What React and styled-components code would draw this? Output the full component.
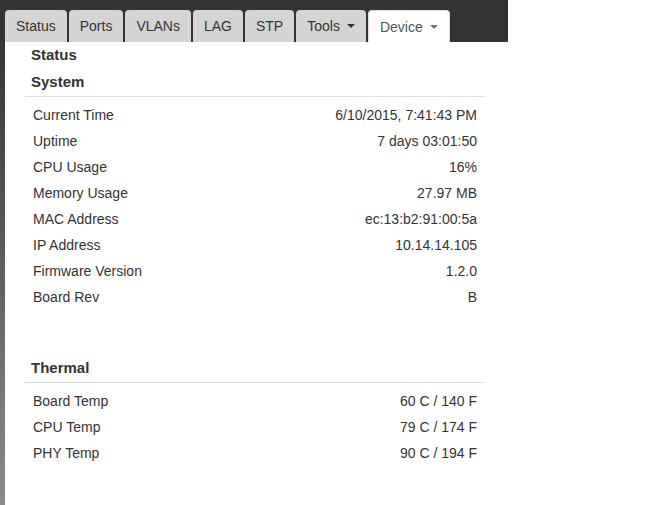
import React from 'react';
import styled, { createGlobalStyle } from 'styled-components';

const GlobalStyle = createGlobalStyle`
    html, body {
        margin: 0;
        padding: 0;
        background: #fff;
        font-family: 'Liberation Sans', Arial, sans-serif;
        font-size: 14px;
        color: #333;
    }
`;

const Page = styled.div`
    width: 508px;
    min-height: 100vh;
    display: flex;
    flex-direction: column;
`;

const TabBar = styled.ul`
    display: flex;
    align-items: flex-end;
    gap: 2px;
    margin: 0;
    padding: 10px 0 0 5px;
    list-style: none;
    background: #333;
`;

const Tab = styled.li`
    display: flex;
    align-items: center;
    height: ${(p) => (p.$active ? '31px' : '32px')};
    padding: 0 11px;
    border-radius: 4px 4px 0 0;
    background: ${(p) => (p.$active ? '#fff' : '#d4d4d4')};
    border: ${(p) => (p.$active ? '1px solid #ddd' : 'none')};
    border-bottom: none;
    color: ${(p) => (p.$active ? '#555' : '#333')};
    line-height: 20px;
    white-space: nowrap;
`;

const Caret = styled.span`
    display: inline-block;
    width: 0;
    height: 0;
    margin-left: 7px;
    border-top: 4px solid ${(p) => (p.$light ? '#777' : '#333')};
    border-left: 4px solid transparent;
    border-right: 4px solid transparent;
`;

const Body = styled.div`
    flex: 1;
    display: flex;
`;

const Strip = styled.div`
    width: 5px;
    background: linear-gradient(#353535, #8b8b8b);
`;

const Panel = styled.div`
    flex: 1;
    background: #fff;
    padding: 3px 0 0 20px;
`;

const PageTitle = styled.div`
    font-size: 15px;
    font-weight: bold;
    line-height: 20px;
    padding-left: 6px;
    margin-bottom: 7px;
`;

const Section = styled.section`
    width: 460px;
    margin-bottom: ${(p) => p.$gap || 0}px;
`;

const SectionTitle = styled.div`
    font-size: 15px;
    font-weight: bold;
    line-height: 20px;
    padding: 0 0 4px 6px;
    border-bottom: 1px solid #ddd;
`;

const Rows = styled.div`
    padding: 5px 8px 0 8px;
`;

const Row = styled.div`
    display: flex;
    justify-content: space-between;
    line-height: 26px;
`;

const system = [
    ['Current Time', '6/10/2015, 7:41:43 PM'],
    ['Uptime', '7 days 03:01:50'],
    ['CPU Usage', '16%'],
    ['Memory Usage', '27.97 MB'],
    ['MAC Address', 'ec:13:b2:91:00:5a'],
    ['IP Address', '10.14.14.105'],
    ['Firmware Version', '1.2.0'],
    ['Board Rev', 'B'],
];

const thermal = [
    ['Board Temp', '60 C / 140 F'],
    ['CPU Temp', '79 C / 174 F'],
    ['PHY Temp', '90 C / 194 F'],
];

function App() {
    return (
        <>
            <GlobalStyle />
            <Page>
                <TabBar>
                    <Tab>Status</Tab>
                    <Tab>Ports</Tab>
                    <Tab>VLANs</Tab>
                    <Tab>LAG</Tab>
                    <Tab>STP</Tab>
                    <Tab>Tools<Caret /></Tab>
                    <Tab $active>Device<Caret $light /></Tab>
                </TabBar>
                <Body>
                    <Strip />
                    <Panel>
                        <PageTitle>Status</PageTitle>
                        <Section $gap={48}>
                            <SectionTitle>System</SectionTitle>
                            <Rows>
                                {system.map(([k, v]) => (
                                    <Row key={k}><span>{k}</span><span>{v}</span></Row>
                                ))}
                            </Rows>
                        </Section>
                        <Section>
                            <SectionTitle>Thermal</SectionTitle>
                            <Rows>
                                {thermal.map(([k, v]) => (
                                    <Row key={k}><span>{k}</span><span>{v}</span></Row>
                                ))}
                            </Rows>
                        </Section>
                    </Panel>
                </Body>
            </Page>
        </>
    );
}

export default App;
